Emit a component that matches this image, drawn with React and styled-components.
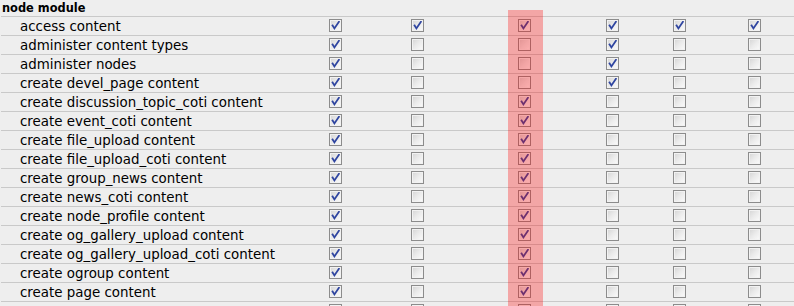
import React from "react";
import styled, { createGlobalStyle } from "styled-components";

const Global = createGlobalStyle`
  html, body { margin: 0; padding: 0; background: #eeeeee; }
  body { font-family: "DejaVu Sans", Verdana, sans-serif; color: #000; }
`;

const Page = styled.div`
  position: relative;
  width: 794px;
  height: 306px;
  overflow: hidden;
  background: #eeeeee;
`;

const Row = styled.div`
  display: grid;
  grid-template-columns: 328px 82px 107px 88px 67px 75px 1fr;
  align-items: start;
  height: ${(p) => (p.$header ? 16 : 18)}px;
  border-bottom: 1px solid #c9c9c9;
  margin-left: 1px;
  overflow: hidden;
`;

const ModuleTitle = styled.div`
  grid-column: 1 / -1;
  font-weight: bold;
  font-size: 11.4px;
  padding-left: 1px;
  line-height: 17px;
  white-space: nowrap;
`;

const Label = styled.div`
  font-size: 13.4px;
  padding-left: 19px;
  white-space: nowrap;
  line-height: 18px;
  padding-top: 1px;
`;

const Cell = styled.div`
  display: flex;
  align-items: flex-start;
  height: 18px;
  padding-top: 2px;
  box-sizing: border-box;
`;

const Box = styled.span`
  box-sizing: border-box;
  width: 13px;
  height: 13px;
  border: 1px solid #8c8c8c;
  background: linear-gradient(135deg, #d4d4d4 0%, #ebebeb 50%, #fbfbfb 100%);
  box-shadow: inset 0 0 0 1px #f2f2f2;
  display: flex;
  align-items: center;
  justify-content: center;
`;

const Overlay = styled.div`
  position: absolute;
  left: 508px;
  top: 10px;
  width: 35px;
  bottom: 0;
  background: rgba(255, 0, 0, 0.3);
  pointer-events: none;
`;

const Check = () => (
  <svg width="9" height="9" viewBox="0 0 9 9">
    <path d="M1.6 4.6 L3.4 7.4 L7.9 0.8" fill="none" stroke="#2f45a0" strokeWidth="1.8" strokeLinecap="square" />
  </svg>
);

const CheckBox = ({ on }) => <Box>{on && <Check />}</Box>;

const rows = [
  ["access content", [1, 1, 1, 1, 1, 1]],
  ["administer content types", [1, 0, 0, 1, 0, 0]],
  ["administer nodes", [1, 0, 0, 1, 0, 0]],
  ["create devel_page content", [1, 0, 0, 1, 0, 0]],
  ["create discussion_topic_coti content", [1, 0, 1, 0, 0, 0]],
  ["create event_coti content", [1, 0, 1, 0, 0, 0]],
  ["create file_upload content", [1, 0, 1, 0, 0, 0]],
  ["create file_upload_coti content", [1, 0, 1, 0, 0, 0]],
  ["create group_news content", [1, 0, 1, 0, 0, 0]],
  ["create news_coti content", [1, 0, 1, 0, 0, 0]],
  ["create node_profile content", [1, 0, 1, 0, 0, 0]],
  ["create og_gallery_upload content", [1, 0, 1, 0, 0, 0]],
  ["create og_gallery_upload_coti content", [1, 0, 1, 0, 0, 0]],
  ["create ogroup content", [1, 0, 1, 0, 0, 0]],
  ["create page content", [1, 0, 1, 0, 0, 0]],
  ["", [1, 0, 1, 0, 0, 0]],
];

export default function App() {
  return (
    <Page>
      <Global />
      <Row $header>
        <ModuleTitle>node module</ModuleTitle>
      </Row>
      {rows.map(([label, checks], r) => (
        <Row key={r}>
          <Label>{label}</Label>
          {checks.map((c, i) => (
            <Cell key={i}>
              <CheckBox on={!!c} />
            </Cell>
          ))}
        </Row>
      ))}
      <Overlay />
    </Page>
  );
}
